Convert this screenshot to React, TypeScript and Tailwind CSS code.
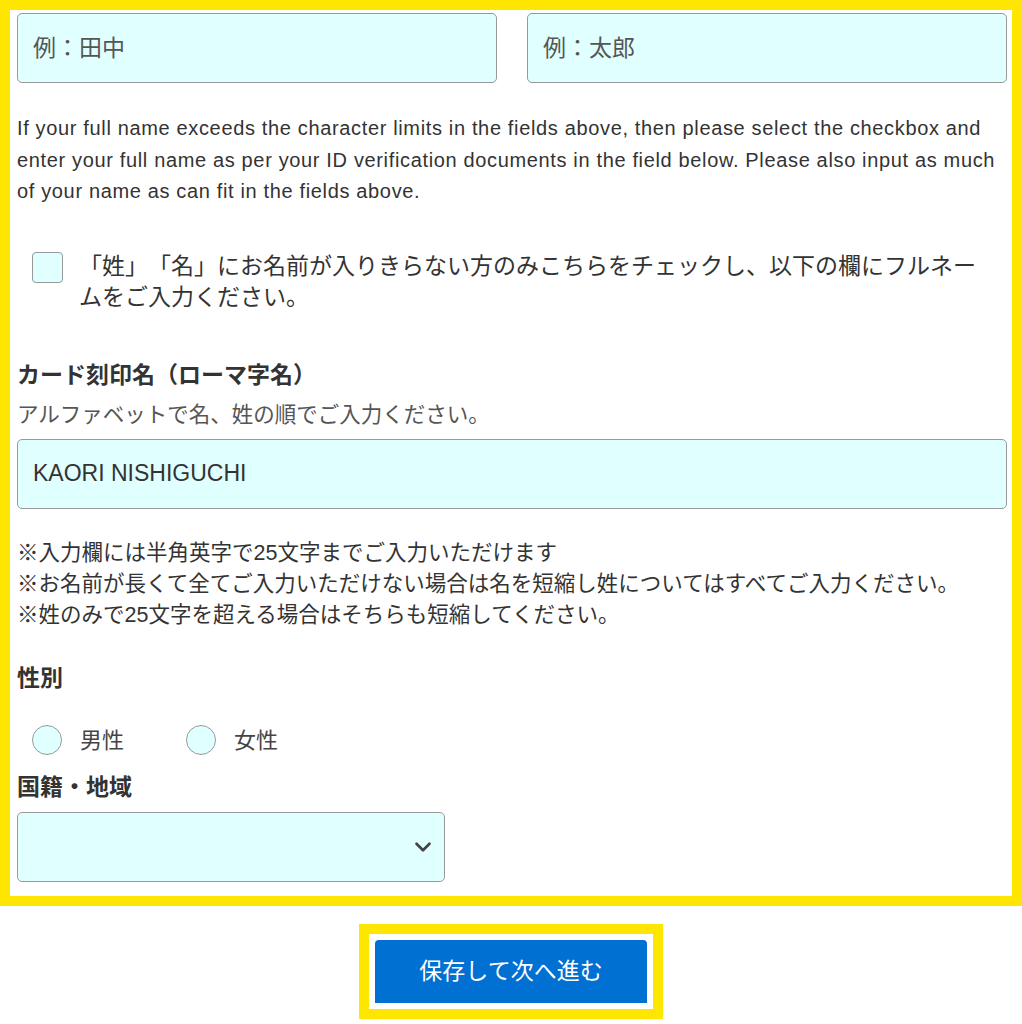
import { ChevronDown } from 'lucide-react';

const font = 'font-["Liberation_Sans","Noto_Sans_CJK_JP",sans-serif] [text-spacing-trim:space-all]';

function TextBox({ value, placeholder, className = '' }: { value?: string; placeholder?: string; className?: string }) {
  return (
    <div
      className={`h-[70px] flex items-center px-[15px] bg-[#e0ffff] border-[1.5px] border-[#999] rounded-[5px] text-[23px] ${className}`}
    >
      {value ? <span className="text-[#333]">{value}</span> : <span className="text-[#555]">{placeholder}</span>}
    </div>
  );
}

function Radio({ label }: { label: string }) {
  return (
    <label className="flex items-center gap-[18px]">
      <span className="w-[30px] h-[30px] rounded-full bg-[#e0ffff] border-[1.5px] border-[#999]" />
      <span className="text-[22px] text-[#444]">{label}</span>
    </label>
  );
}

export default function App() {
  return (
    <div className={`w-[1022px] h-[1024px] bg-white overflow-hidden ${font}`}>
      {/* フォーム枠 */}
      <div className="h-[906px] border-[10px] border-[#ffe600] pt-[3px] pl-[7px] pr-[5px]">
        <div className="grid grid-cols-2 gap-[30px]">
          <TextBox placeholder="例：田中" />
          <TextBox placeholder="例：太郎" />
        </div>

        <p className="mt-[30px] text-[20px] tracking-[0.65px] leading-[31.5px] text-[#333]">
          If your full name exceeds the character limits in the fields above, then please select the checkbox and
          enter your full name as per your ID verification documents in the field below. Please also input as much
          of your name as can fit in the fields above.
        </p>

        <div className="mt-[44px] pl-[15px] flex gap-[16px]">
          <span className="shrink-0 w-[31px] h-[31px] rounded-[4px] bg-[#e0ffff] border-[1.5px] border-[#999]" />
          <p className="w-[905px] text-[23px] leading-[31px] text-[#333] -mt-[1px]">
            「姓」「名」にお名前が入りきらない方のみこちらをチェックし、以下の欄にフルネームをご入力ください。
          </p>
        </div>

        <h3 className="mt-[47px] text-[23px] leading-[31px] font-bold text-[#333]">カード刻印名（ローマ字名）</h3>
        <p className="mt-[9px] text-[21.5px] leading-[31px] text-[#555]">アルファベットで名、姓の順でご入力ください。</p>
        <TextBox value="KAORI NISHIGUCHI" className="mt-[8px]" />

        <div className="mt-[29px] text-[21.5px] leading-[31px] text-[#333]">
          <p>※入力欄には半角英字で25文字までご入力いただけます</p>
          <p>※お名前が長くて全てご入力いただけない場合は名を短縮し姓についてはすべてご入力ください。</p>
          <p>※姓のみで25文字を超える場合はそちらも短縮してください。</p>
        </div>

        <h3 className="mt-[32px] text-[23px] leading-[31px] font-bold text-[#333]">性別</h3>
        <div className="mt-[30px] pl-[15px] flex gap-[62px]">
          <Radio label="男性" />
          <Radio label="女性" />
        </div>

        <h3 className="mt-[15px] text-[23px] leading-[31px] font-bold text-[#333]">国籍・地域</h3>
        <div className="mt-[9px] w-[428px] h-[70px] flex items-center justify-end pr-[8px] bg-[#e0ffff] border-[1.5px] border-[#999] rounded-[5px]">
          <ChevronDown size={26} strokeWidth={2.5} className="text-[#444]" />
        </div>
      </div>

      {/* 送信ボタン */}
      <div className="mt-[18px] flex justify-center">
        <div className="border-[10px] border-[#ffe600] p-[6px]">
          <button className="w-[272px] h-[63px] bg-[#0070d2] rounded-t-[4px] text-white text-[23px]">
            保存して次へ進む
          </button>
        </div>
      </div>
    </div>
  );
}
